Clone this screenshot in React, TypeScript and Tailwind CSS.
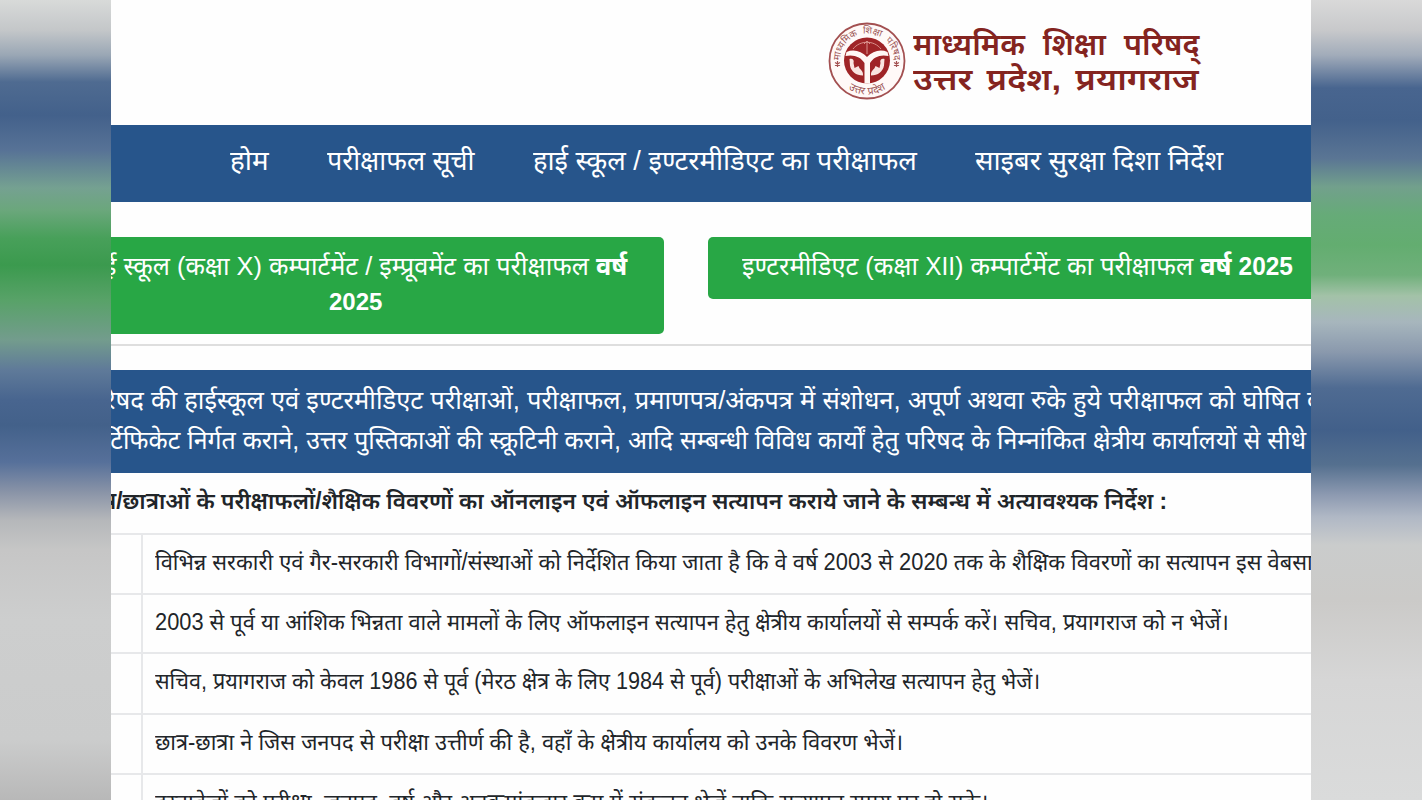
const navItems = [
    { label: 'होम', width: 'w-[97px]', scale: 'scale-x-[1.03]' },
    { label: 'परीक्षाफल सूची', width: 'w-[206px]', scale: 'scale-x-[.992]' },
    { label: 'हाई स्कूल / इण्टरमीडिएट का परीक्षाफल', width: 'w-[442px]', scale: 'scale-x-[1.012]' },
    { label: 'साइबर सुरक्षा दिशा निर्देश', width: 'w-[260px]', scale: 'scale-x-[1.015]' },
];

const instructions = [
    { text: 'विभिन्न सरकारी एवं गैर-सरकारी विभागों/संस्थाओं को निर्देशित किया जाता है कि वे वर्ष 2003 से 2020 तक के शैक्षिक विवरणों का सत्यापन इस वेबसाइट', scale: 'scale-x-[.95]', height: 'h-[58px]' },
    { text: '2003 से पूर्व या आंशिक भिन्नता वाले मामलों के लिए ऑफलाइन सत्यापन हेतु क्षेत्रीय कार्यालयों से सम्पर्क करें। सचिव, प्रयागराज को न भेजें।', scale: 'scale-x-[.948]', height: 'h-[57px]' },
    { text: 'सचिव, प्रयागराज को केवल 1986 से पूर्व (मेरठ क्षेत्र के लिए 1984 से पूर्व) परीक्षाओं के अभिलेख सत्यापन हेतु भेजें।', scale: 'scale-x-[.939]', height: 'h-[59px]' },
    { text: 'छात्र-छात्रा ने जिस जनपद से परीक्षा उत्तीर्ण की है, वहाँ के क्षेत्रीय कार्यालय को उनके विवरण भेजें।', scale: 'scale-x-[.951]', height: 'h-[58px]' },
    { text: 'दस्तावेजों को परीक्षा, जनपद, वर्ष और अनुक्रमांकवार क्रम में संकलन भेजें ताकि सत्यापन समय पर हो सके।', scale: 'scale-x-[.96]', height: 'h-[58px]' },
];

function Emblem() {
    return (
        <svg viewBox="0 0 78 78" className="h-[78px] w-[78px] shrink-0">
            <defs>
                <path id="emblem-top" d="M13.500 47.500 A27 27 0 1 1 64.500 47.500" />
                <path id="emblem-bottom" d="M9 54 A33.500 33.500 0 0 0 69 54" />
            </defs>
            <circle cx="39" cy="39" r="37.5" fill="#fff9f8" stroke="#a35051" strokeWidth="1.8" />
            <g fill="#9c5656" fontFamily="'Noto Sans', sans-serif" textAnchor="middle">
                <text fontSize="9.5" wordSpacing="3">
                    <textPath href="#emblem-top" startOffset="50%">माध्यमिक शिक्षा परिषद</textPath>
                </text>
                <text fontSize="10.5" wordSpacing="1">
                    <textPath href="#emblem-bottom" startOffset="50%">उत्तर प्रदेश</textPath>
                </text>
            </g>
            <path d="M9.500 39v6M7 40.500l5 3M12 40.500l-5 3M68.500 39v6M66 40.500l5 3M71 40.500l-5 3" stroke="#a35051" strokeWidth="1.2" />
            <circle cx="39" cy="38.500" r="23" fill="#9f2427" />
            {/* bow and arrow */}
            <path d="M25 27c7-9 21-9 28 0M39 19v13M36 22l3-3 3 3" fill="none" stroke="#d98f8a" strokeWidth="1" />
            {/* rivers meeting */}
            <path d="M18.500 30c7-3 15-1 20.500 5 5.500-6 13.500-8 20.500-5l1 4c-8-2-15 1-18.500 7v20.500h-5.500V41C33 35 25.500 32 17.500 34z" fill="#fff7f5" />
            {/* fish */}
            <path d="M21.500 37c3-1 5 1 4 4l1 5 4-2c1 4 5 4 4.500 9.500-7 0-12-4-13-10zM56.500 37c-3-1-5 1-4 4l-1 5-4-2c-1 4-5 4-4.500 9.500 7 0 12-4 13-10z" fill="#f9e4e0" />
        </svg>
    );
}

export default function App() {
    return (
        <div className="flex h-[800px] w-[1422px] overflow-hidden bg-white font-['Liberation_Sans','Noto_Sans',sans-serif] text-[#212529]">
            <aside className="w-[111px] shrink-0 bg-[linear-gradient(180deg,#d8dad9_0px,#c4c7c9_30px,#9aa7b5_55px,#4f6b91_82px,#43618b_115px,#577296_150px,#75a191_188px,#6ba77c_210px,#48a05a_238px,#3b9a4e_265px,#58a268_300px,#739c8d_340px,#5f7a99_370px,#48658f_400px,#43618a_425px,#56709a_462px,#8691a6_490px,#b5b7ba_520px,#c6c6c6_550px,#cdcece_620px,#cbcccc_740px,#b8b8b8_800px)]" />

            <main className="w-[1200px] shrink-0 overflow-hidden bg-[#fefefe]">
                <header className="flex h-[125px] items-start pt-[22px] pl-[717px]">
                    <Emblem />
                    <div className="ml-[7px] pt-[5px] text-[30px] leading-[35px] font-semibold whitespace-nowrap text-[#842420]">
                        <p className="w-fit origin-left scale-x-[1.024] [word-spacing:9px]">माध्यमिक शिक्षा परिषद्</p>
                        <p className="w-fit origin-left scale-x-[1.152] [word-spacing:4px]">उत्तर प्रदेश, प्रयागराज</p>
                    </div>
                </header>

                <nav className="flex h-[77px] items-center bg-[#27558b] pb-[6px] pl-[119px] text-[27px] leading-[36px] whitespace-nowrap text-white">
                    {navItems.map((item) => (
                        <a key={item.label} className={item.width}>
                            <span className={`inline-block origin-left ${item.scale}`}>{item.label}</span>
                        </a>
                    ))}
                </nav>

                <section className="flex h-[144px] items-start gap-[44px] border-b-2 border-[#dedede] pt-[35px] text-[26px] leading-[36px] whitespace-nowrap text-white">
                    <div className="h-[97px] w-[553px] shrink-0 overflow-hidden rounded-r-[5px] bg-[#28a745] pt-[11px]">
                        <p className="-ml-[27px]">
                            <span className="inline-block origin-left scale-x-[.974]">हाई स्कूल (कक्षा X) कम्पार्टमेंट / इम्प्रूवमेंट का परीक्षाफल <b>वर्ष</b></span>
                        </p>
                        <p className="pl-[218px] text-[24px] font-bold">2025</p>
                    </div>
                    <div className="h-[62px] w-[640px] shrink-0 rounded-[5px] bg-[#28a745] pt-[11px] pl-[34px]">
                        <span className="inline-block origin-left scale-x-[.977]">इण्टरमीडिएट (कक्षा <span className="text-[25px]">XII</span>) कम्पार्टमेंट का परीक्षाफल <b>वर्ष <span className="text-[25px]">2025</span></b></span>
                    </div>
                </section>

                <section className="mt-[24px] h-[103px] overflow-hidden bg-[#27558b] pt-[10px] text-[26px] leading-[40px] whitespace-nowrap text-white">
                    <p className="-ml-[27px]">
                        <span className="inline-block origin-left scale-x-[.982]">परिषद की हाईस्कूल एवं इण्टरमीडिएट परीक्षाओं, परीक्षाफल, प्रमाणपत्र/अंकपत्र में संशोधन, अपूर्ण अथवा रुके हुये परीक्षाफल को घोषित कराने</span>
                    </p>
                    <p className="-ml-[24px]">
                        <span className="inline-block origin-left scale-x-[.959]">सर्टिफिकेट निर्गत कराने, उत्तर पुस्तिकाओं की स्क्रूटिनी कराने, आदि सम्बन्धी विविध कार्यों हेतु परिषद के निम्नांकित क्षेत्रीय कार्यालयों से सीधे</span>
                    </p>
                </section>

                <h2 className="h-[60px] overflow-hidden pt-[10px] text-[23px] leading-[36px] font-semibold whitespace-nowrap">
                    <span className="-ml-[31px] inline-block origin-left scale-x-[.985]">छात्र/छात्राओं के परीक्षाफलों/शैक्षिक विवरणों का ऑनलाइन एवं ऑफलाइन सत्यापन कराये जाने के सम्बन्ध में अत्यावश्यक निर्देश :</span>
                </h2>

                <div className="text-[23px] leading-[36px] whitespace-nowrap">
                    {instructions.map((row) => (
                        <div key={row.text} className="flex border-t-2 border-[#e7e8ea]">
                            <div className="w-[32px] shrink-0 border-r-2 border-[#e7e8ea]" />
                            <p className={`pt-[9px] pl-[12px] ${row.height}`}>
                                <span className={`inline-block origin-left ${row.scale}`}>{row.text}</span>
                            </p>
                        </div>
                    ))}
                </div>
            </main>

            <aside className="w-[111px] shrink-0 bg-[linear-gradient(180deg,#d9d9d9_0px,#c8c9cb_30px,#a2acba_55px,#48658f_88px,#43618b_120px,#5a7594_158px,#72a08c_187px,#66ab78_215px,#63ad70_245px,#70b07b_275px,#a3c2a8_296px,#a7b6bd_322px,#8a99ad_352px,#4f6b92_388px,#42608a_430px,#55708f_465px,#8d9ab1_495px,#b0b8c5_517px,#cacccc_545px,#cbcac8_600px,#d6d6d6_680px,#dadbdb_800px)]" />
        </div>
    );
}
